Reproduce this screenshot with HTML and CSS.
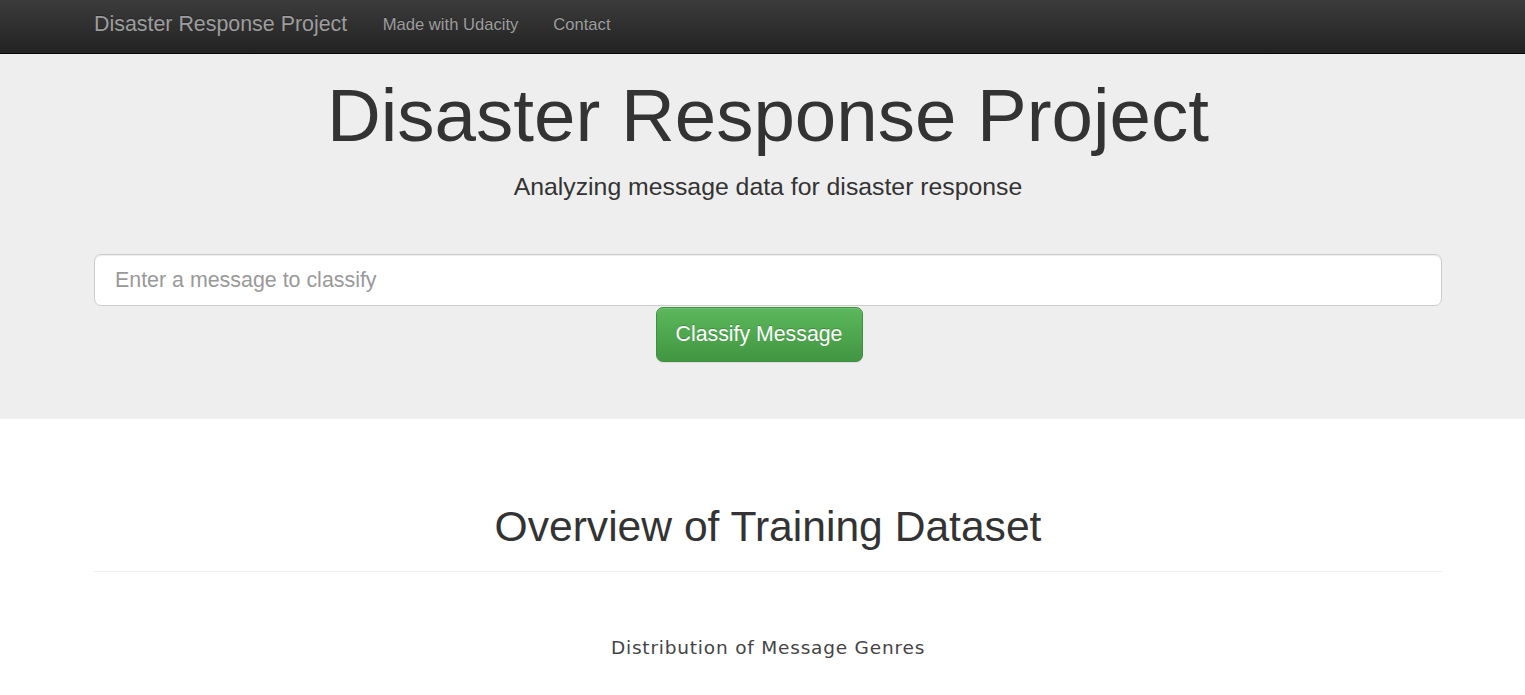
FILE: index.html
```html
<!DOCTYPE html>
<html lang="en">
<head>
<meta charset="utf-8">
<title>Disaster Response Project</title>
<link rel="stylesheet" href="styles.css">
</head>
<body>
<nav class="navbar">
  <div class="container nav-inner">
    <a class="brand" href="#">Disaster Response Project</a>
    <a class="nav-link" href="#">Made with Udacity</a>
    <a class="nav-link" href="#">Contact</a>
  </div>
</nav>
<header class="jumbotron">
  <div class="container jumbo-inner">
    <h1 class="jumbo-title">Disaster Response Project</h1>
    <p class="jumbo-sub">Analyzing message data for disaster response</p>
    <form class="classify-form">
      <input class="msg-input" type="text" placeholder="Enter a message to classify">
      <button class="btn-success" type="button">Classify Message</button>
    </form>
  </div>
</header>
<main class="container">
  <h1 class="section-title">Overview of Training Dataset</h1>
  <hr class="divider">
  <div class="chart-title">Distribution of Message Genres</div>
</main>
</body>
</html>
```
FILE: styles.css
```css
* { box-sizing: border-box; }
html, body { margin: 0; padding: 0; }
body {
  font-family: "Liberation Sans", Arial, sans-serif;
  color: #333;
  background: #fff;
  overflow: hidden;
}
.container {
  margin-left: 94px;
  width: 1348px;
}
.navbar {
  height: 54px;
  background: linear-gradient(to bottom, #3c3c3c 0%, #222 100%);
  border-bottom: 1px solid #080808;
}
.nav-inner {
  display: flex;
  align-items: center;
  height: 53px;
}
.brand {
  font-size: 21.4px;
  color: #9d9d9d;
  text-decoration: none;
  padding-right: 18px;
  text-shadow: 0 -1px 0 rgba(0,0,0,.25);
  position: relative;
  top: -2px;
}
.nav-link {
  font-size: 16.6px;
  color: #9d9d9d;
  text-decoration: none;
  padding: 0 17.5px;
  text-shadow: 0 -1px 0 rgba(0,0,0,.25);
  position: relative;
  top: -2px;
}
.jumbotron {
  background: #eee;
  padding: 23px 0 57px;
}
.jumbo-inner {
  display: flex;
  flex-direction: column;
  align-items: center;
}
.jumbo-title {
  margin: 0;
  font-size: 74.5px;
  font-weight: 400;
  line-height: 77px;
  color: #333;
}
.jumbo-sub {
  margin: 17px 0 0;
  font-size: 24.8px;
  line-height: 32px;
}
.classify-form {
  margin-top: 51px;
  width: 100%;
  display: flex;
  flex-direction: column;
  align-items: center;
}
.msg-input {
  width: 100%;
  height: 52px;
  border: 1px solid #ccc;
  border-radius: 7px;
  background: #fff;
  padding: 0 20px;
  font-family: "Liberation Sans", Arial, sans-serif;
  font-size: 21.4px;
  color: #555;
  box-shadow: inset 0 1px 1px rgba(0,0,0,.075);
  outline: none;
}
.msg-input::placeholder { color: #999; }
.btn-success {
  margin: 1px 18px 0 0;
  width: 207px;
  height: 55px;
  border: 1px solid #3e8f3e;
  border-radius: 7px;
  background: linear-gradient(to bottom, #5cb85c 0%, #419641 100%);
  color: #fff;
  font-family: "Liberation Sans", Arial, sans-serif;
  font-size: 21.3px;
  text-shadow: 0 -1px 0 rgba(0,0,0,.2);
  box-shadow: inset 0 1px 0 rgba(255,255,255,.15), 0 1px 1px rgba(0,0,0,.075);
  padding: 0;
}
.section-title {
  margin: 85px 0 0;
  text-align: center;
  font-size: 42.6px;
  font-weight: 400;
  line-height: 44px;
}
.divider {
  margin: 23px 0 0;
  border: 0;
  border-top: 1px solid #eee;
}
.chart-title {
  margin-top: 66px;
  text-align: center;
  font-family: "DejaVu Sans", Verdana, sans-serif;
  font-size: 18.5px;
  letter-spacing: 0.8px;
  line-height: 20px;
  color: #444;
}
```
